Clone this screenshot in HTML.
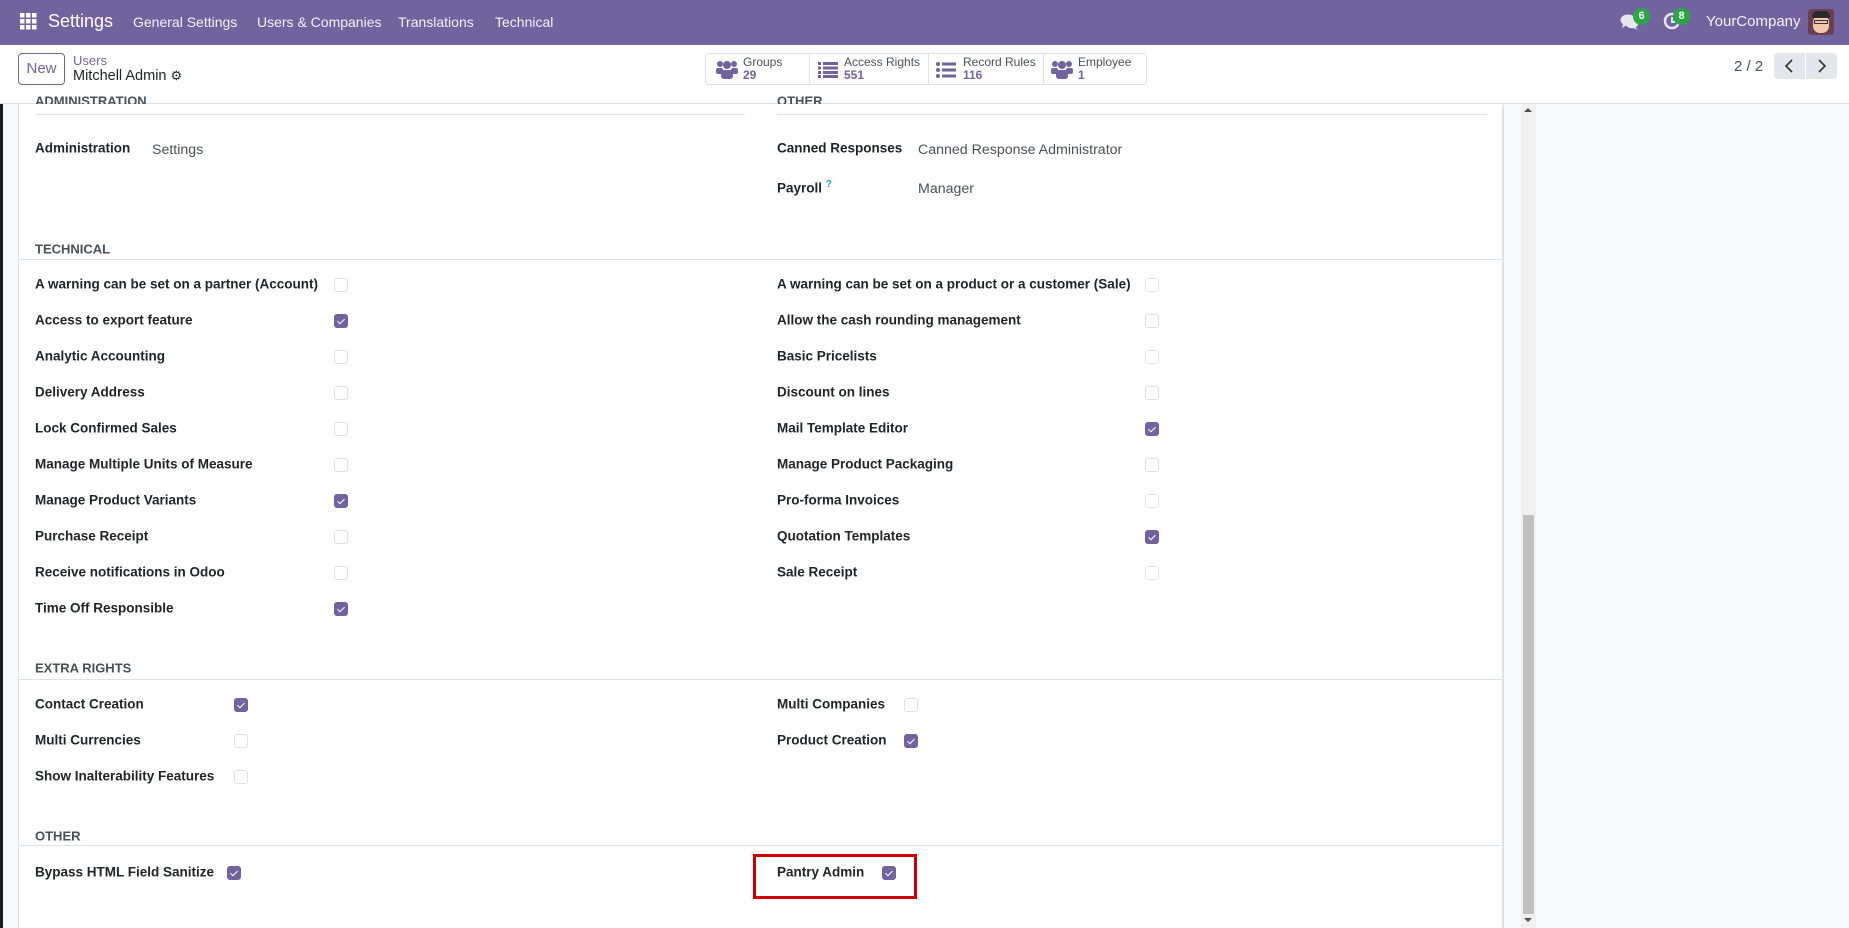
<!DOCTYPE html>
<html><head><meta charset="utf-8"><style>
*{box-sizing:border-box;margin:0;padding:0}
body{width:1849px;height:928px;overflow:hidden;font-family:"Liberation Sans",sans-serif;background:#f8f9fa;position:relative;color:#212529}
.a{position:absolute;white-space:nowrap}
.nav{position:absolute;left:0;top:0;width:1849px;height:45px;background:#71639e;color:#fff}
.nav .m{font-size:14px;top:14px;color:#f3f0f8}
.cp{position:absolute;left:0;top:45px;width:1849px;height:59px;background:#fff;border-bottom:1px solid #dee2e6}
.sheet{position:absolute;left:18px;top:104px;width:1486px;height:824px;background:#fff;border-left:1px solid #dee2e6;border-right:2px solid #dee2e6;overflow:hidden}
.lbl{font-size:13.5px;font-weight:bold;color:#212529;transform:translateY(-50%)}
.val{font-size:14.2px;color:#495057;transform:translateY(-50%)}
.hdr{font-size:13px;font-weight:bold;color:#495057;transform:translateY(-50%)}
.line{position:absolute;height:1px;background:#dee2e6}
.cb{position:absolute;width:14px;height:14px;border:1px solid #dee2e6;border-radius:3px;background:#fff;transform:translate(-50%,-50%)}
.cb.on{background:#71639e;border-color:#71639e}
.cb.on::after{content:"";position:absolute;left:4px;top:2px;width:3px;height:6px;border:solid #fff;border-width:0 1.6px 1.6px 0;transform:rotate(45deg)}
.stat{position:absolute;top:53px;height:32px;border:1px solid #dee2e6;border-radius:4px;background:#fff}
.st{position:absolute;top:0;font-size:12px;line-height:13px;color:#495057}
.st b{display:block;color:#71639e;font-weight:bold}
</style></head><body>
<div class="nav">
  <svg class="a" style="left:20px;top:13px" width="17" height="17" viewBox="0 0 17 17" fill="#fff"><rect x="0" y="0" width="4.5" height="4.5"/><rect x="6" y="0" width="4.5" height="4.5"/><rect x="12" y="0" width="4.5" height="4.5"/><rect x="0" y="6" width="4.5" height="4.5"/><rect x="6" y="6" width="4.5" height="4.5"/><rect x="12" y="6" width="4.5" height="4.5"/><rect x="0" y="12" width="4.5" height="4.5"/><rect x="6" y="12" width="4.5" height="4.5"/><rect x="12" y="12" width="4.5" height="4.5"/></svg>
  <div class="a" style="left:48px;top:11px;font-size:18px;color:#fff">Settings</div>
  <div class="a m" style="left:133px">General Settings</div>
  <div class="a m" style="left:257px">Users &amp; Companies</div>
  <div class="a m" style="left:398px">Translations</div>
  <div class="a m" style="left:495px">Technical</div>
  <svg class="a" style="left:1620px;top:13px" width="20" height="18" viewBox="0 0 20 18" fill="#e8e4f0"><ellipse cx="8" cy="7" rx="7.5" ry="5.5"/><path d="M3 11 L2 15 L7 12Z"/><ellipse cx="12" cy="11" rx="6" ry="4.3"/><path d="M15 14 L18 17 L13 15Z"/></svg>
  <div class="a" style="left:1633px;top:8px;width:17px;height:17px;border-radius:50%;background:#28a745;color:#fff;font-size:11px;font-weight:bold;text-align:center;line-height:17px">6</div>
  <svg class="a" style="left:1663px;top:12px" width="18" height="18" viewBox="0 0 18 18"><circle cx="9" cy="9" r="7" fill="none" stroke="#e8e4f0" stroke-width="2.5"/><path d="M9 5v5h3" stroke="#e8e4f0" stroke-width="2" fill="none"/></svg>
  <div class="a" style="left:1673px;top:8px;width:17px;height:17px;border-radius:50%;background:#28a745;color:#fff;font-size:11px;font-weight:bold;text-align:center;line-height:17px">8</div>
  <div class="a" style="left:1706px;top:13px;font-size:15px;color:#f3f0f8">YourCompany</div>
  <div class="a" style="left:1808px;top:9px;width:26px;height:26px;border-radius:3px;background:#6b3f52;overflow:hidden">
    <div style="position:absolute;left:5px;top:6px;width:16px;height:18px;border-radius:7px;background:#f2c9a8"></div>
    <div style="position:absolute;left:4px;top:2px;width:18px;height:7px;border-radius:5px 5px 2px 2px;background:#2b2b2b"></div>
    <div style="position:absolute;left:6px;top:11px;width:14px;height:4px;border:1px solid #333"></div>
  </div>
</div>
<div class="cp">
  <div class="a" style="left:18px;top:8px;width:47px;height:32px;border:1px solid #71639e;border-radius:4px;color:#71639e;font-size:15px;text-align:center;line-height:30px">New</div>
  <div class="a" style="left:73px;top:8px;font-size:13px;color:#71639e">Users</div>
  <div class="a" style="left:73px;top:23px;font-size:14.5px;color:#212529">Mitchell Admin <span style="font-size:13px">&#9881;</span></div>
  <div class="a" style="left:1734px;top:13px;font-size:15px;color:#495057">2 / 2</div>
  <div class="a" style="left:1774px;top:8px;width:31px;height:26px;background:#e3e6ea;border-radius:4px 0 0 4px"><svg width="31" height="26"><path d="M18 7l-6 6 6 6" stroke="#333" stroke-width="1.6" fill="none"/></svg></div>
  <div class="a" style="left:1806px;top:8px;width:31px;height:26px;background:#e3e6ea;border-radius:0 4px 4px 0"><svg width="31" height="26"><path d="M13 7l6 6-6 6" stroke="#333" stroke-width="1.6" fill="none"/></svg></div>
</div>
<div class="stat" style="left:705px;width:442px"></div>
<div class="a" style="left:809px;top:54px;width:1px;height:30px;background:#dee2e6"></div>
<div class="a" style="left:928px;top:54px;width:1px;height:30px;background:#dee2e6"></div>
<div class="a" style="left:1043px;top:54px;width:1px;height:30px;background:#dee2e6"></div>
<svg class="a" style="left:716px;top:60px" width="22" height="20" viewBox="0 0 22 20" fill="#71639e"><circle cx="4" cy="4" r="3"/><circle cx="18" cy="4" r="3"/><circle cx="11" cy="5" r="4"/><rect x="0" y="8" width="7" height="6" rx="2"/><rect x="15" y="8" width="7" height="6" rx="2"/><rect x="5" y="10" width="12" height="9" rx="3"/></svg>
<div class="st a" style="left:743px;top:56px">Groups<b>29</b></div>
<svg class="a" style="left:818px;top:62px" width="20" height="16" fill="#71639e"><rect x="0" y="0" width="3" height="3"/><rect x="5" y="0" width="15" height="3"/><rect x="0" y="4.5" width="3" height="3"/><rect x="5" y="4.5" width="15" height="3"/><rect x="0" y="9" width="3" height="3"/><rect x="5" y="9" width="15" height="3"/><rect x="0" y="13" width="3" height="3"/><rect x="5" y="13" width="15" height="3"/></svg>
<div class="st a" style="left:844px;top:56px">Access Rights<b>551</b></div>
<svg class="a" style="left:936px;top:61px" width="20" height="18" fill="#71639e"><circle cx="2" cy="3" r="2"/><rect x="6" y="1.5" width="14" height="3"/><circle cx="2" cy="9" r="2"/><rect x="6" y="7.5" width="14" height="3"/><circle cx="2" cy="15" r="2"/><rect x="6" y="13.5" width="14" height="3"/></svg>
<div class="st a" style="left:963px;top:56px">Record Rules<b>116</b></div>
<svg class="a" style="left:1051px;top:60px" width="22" height="20" viewBox="0 0 22 20" fill="#71639e"><circle cx="4" cy="4" r="3"/><circle cx="18" cy="4" r="3"/><circle cx="11" cy="5" r="4"/><rect x="0" y="8" width="7" height="6" rx="2"/><rect x="15" y="8" width="7" height="6" rx="2"/><rect x="5" y="10" width="12" height="9" rx="3"/></svg>
<div class="st a" style="left:1078px;top:56px">Employee<b>1</b></div>

<div class="a" style="left:0;top:104px;width:3px;height:824px;background:#1e1b1f"></div>
<div class="sheet"></div>
<div class="a" style="left:1521px;top:104px;width:15px;height:824px;background:#f0f0f0"></div>
<div class="a" style="left:1523px;top:515px;width:11px;height:399px;background:#c0c0c0"></div>
<div class="a" style="left:1524px;top:108px;width:0;height:0;border-left:4px solid transparent;border-right:4px solid transparent;border-bottom:4px solid #505050"></div>
<div class="a" style="left:1524px;top:918px;width:0;height:0;border-left:4px solid transparent;border-right:4px solid transparent;border-top:4px solid #505050"></div>

<div class="a hdr" style="left:35px;top:101px">ADMINISTRATION</div>
<div class="a hdr" style="left:777px;top:101px">OTHER</div>
<div class="a" style="left:19px;top:104px;width:1484px;height:3px;background:#fff"></div>
<div class="line" style="left:35px;top:114px;width:710px"></div>
<div class="line" style="left:777px;top:114px;width:710px"></div>
<div class="a lbl" style="left:35px;top:148px">Administration</div>
<div class="a val" style="left:152px;top:150px">Settings</div>
<div class="a lbl" style="left:777px;top:148px">Canned Responses</div>
<div class="a val" style="left:918px;top:150px">Canned Response Administrator</div>
<div class="a lbl" style="left:777px;top:187px">Payroll <sup style="color:#17a2b8;font-size:10px">?</sup></div>
<div class="a val" style="left:918px;top:189px">Manager</div>

<div class="a hdr" style="left:35px;top:249px">TECHNICAL</div>
<div class="line" style="left:19px;top:259px;width:1484px"></div>

<div class="a lbl" style="left:35px;top:284px">A warning can be set on a partner (Account)</div><div class="cb" style="left:341px;top:285px"></div>
<div class="a lbl" style="left:35px;top:320px">Access to export feature</div><div class="cb on" style="left:341px;top:321px"></div>
<div class="a lbl" style="left:35px;top:356px">Analytic Accounting</div><div class="cb" style="left:341px;top:357px"></div>
<div class="a lbl" style="left:35px;top:392px">Delivery Address</div><div class="cb" style="left:341px;top:393px"></div>
<div class="a lbl" style="left:35px;top:428px">Lock Confirmed Sales</div><div class="cb" style="left:341px;top:429px"></div>
<div class="a lbl" style="left:35px;top:464px">Manage Multiple Units of Measure</div><div class="cb" style="left:341px;top:465px"></div>
<div class="a lbl" style="left:35px;top:500px">Manage Product Variants</div><div class="cb on" style="left:341px;top:501px"></div>
<div class="a lbl" style="left:35px;top:536px">Purchase Receipt</div><div class="cb" style="left:341px;top:537px"></div>
<div class="a lbl" style="left:35px;top:572px">Receive notifications in Odoo</div><div class="cb" style="left:341px;top:573px"></div>
<div class="a lbl" style="left:35px;top:608px">Time Off Responsible</div><div class="cb on" style="left:341px;top:609px"></div>

<div class="a lbl" style="left:777px;top:284px">A warning can be set on a product or a customer (Sale)</div><div class="cb" style="left:1152px;top:285px"></div>
<div class="a lbl" style="left:777px;top:320px">Allow the cash rounding management</div><div class="cb" style="left:1152px;top:321px"></div>
<div class="a lbl" style="left:777px;top:356px">Basic Pricelists</div><div class="cb" style="left:1152px;top:357px"></div>
<div class="a lbl" style="left:777px;top:392px">Discount on lines</div><div class="cb" style="left:1152px;top:393px"></div>
<div class="a lbl" style="left:777px;top:428px">Mail Template Editor</div><div class="cb on" style="left:1152px;top:429px"></div>
<div class="a lbl" style="left:777px;top:464px">Manage Product Packaging</div><div class="cb" style="left:1152px;top:465px"></div>
<div class="a lbl" style="left:777px;top:500px">Pro-forma Invoices</div><div class="cb" style="left:1152px;top:501px"></div>
<div class="a lbl" style="left:777px;top:536px">Quotation Templates</div><div class="cb on" style="left:1152px;top:537px"></div>
<div class="a lbl" style="left:777px;top:572px">Sale Receipt</div><div class="cb" style="left:1152px;top:573px"></div>

<div class="a hdr" style="left:35px;top:668px">EXTRA RIGHTS</div>
<div class="line" style="left:19px;top:679px;width:1484px"></div>
<div class="a lbl" style="left:35px;top:704px">Contact Creation</div><div class="cb on" style="left:241px;top:705px"></div>
<div class="a lbl" style="left:35px;top:740px">Multi Currencies</div><div class="cb" style="left:241px;top:741px"></div>
<div class="a lbl" style="left:35px;top:776px">Show Inalterability Features</div><div class="cb" style="left:241px;top:777px"></div>
<div class="a lbl" style="left:777px;top:704px">Multi Companies</div><div class="cb" style="left:911px;top:705px"></div>
<div class="a lbl" style="left:777px;top:740px">Product Creation</div><div class="cb on" style="left:911px;top:741px"></div>

<div class="a hdr" style="left:35px;top:836px">OTHER</div>
<div class="line" style="left:19px;top:845px;width:1484px"></div>
<div class="a lbl" style="left:35px;top:872px">Bypass HTML Field Sanitize</div><div class="cb on" style="left:234px;top:873px"></div>
<div class="a lbl" style="left:777px;top:872px">Pantry Admin</div><div class="cb on" style="left:889px;top:873px"></div>
<div class="a" style="left:753px;top:854px;width:164px;height:45px;border:3px solid #cc0000"></div>
</body></html>
